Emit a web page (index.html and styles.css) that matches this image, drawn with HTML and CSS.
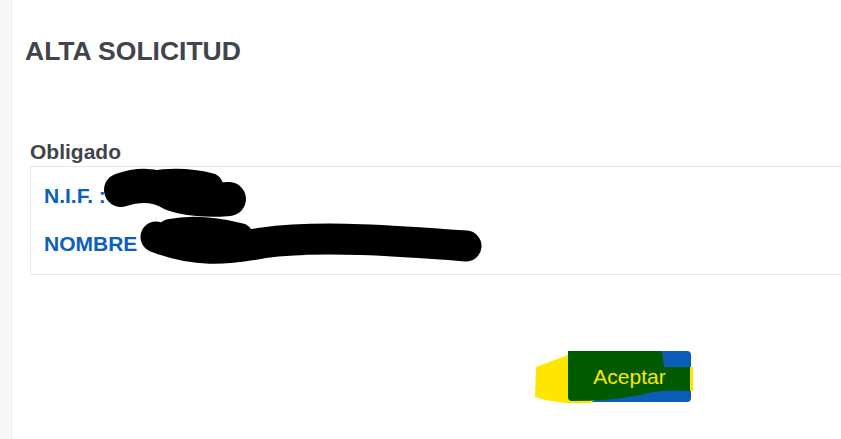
FILE: index.html
```html
<!DOCTYPE html>
<html lang="es">
<head>
<meta charset="utf-8">
<title>Alta solicitud</title>
<link rel="stylesheet" href="styles.css">
</head>
<body>
<div class="page">
  <aside class="sidebar"></aside>
  <main class="main">
    <h1 class="title">ALTA SOLICITUD</h1>
    <section class="obligado">
      <h2 class="section-title">Obligado</h2>
      <div class="box">
        <div class="row">N.I.F. :</div>
        <div class="row">NOMBRE</div>
      </div>
    </section>
    <div class="actions">
      <button class="btn" type="button">
        <svg class="btn-marks" width="160" height="60" viewBox="533 350 160 60" aria-hidden="true">
          <path d="M568 356 L536 368 L535 398 Q560 406 590 404 L600 398 L568 398 Z" fill="#ffe600"/>
          <path d="M568 352 L662 352 L664 368 L690 368 L690 392 Q660 390 640 396 Q610 402 572 402 Q568 402 568 398 Z" fill="#005a00"/>
          <path d="M690 368 L695 368 L695 392 L690 392 Z" fill="#ffe600"/>
        </svg>
        <span class="btn-text">Aceptar</span>
      </button>
    </div>
  </main>
  <svg class="scribbles" width="841" height="439" viewBox="0 0 841 439" aria-hidden="true">
    <path d="M121 190 Q150 180 172 194 Q195 202 229 199" fill="none" stroke="#000" stroke-width="34" stroke-linecap="round" stroke-linejoin="round"/>
    <path d="M126 190 Q170 176 210 186" fill="none" stroke="#000" stroke-width="26" stroke-linecap="round"/>
    <path d="M156 237 C195 252 225 250 262 243 C320 235 400 241 466 246" fill="none" stroke="#000" stroke-width="31" stroke-linecap="round" stroke-linejoin="round"/>
    <path d="M170 232 Q200 226 240 236" fill="none" stroke="#000" stroke-width="26" stroke-linecap="round"/>
  </svg>
</div>
</body>
</html>
```
FILE: styles.css
```css
html, body {
  margin: 0;
  padding: 0;
  background: #ffffff;
}

.page {
  position: relative;
  display: flex;
  width: 841px;
  height: 439px;
  overflow: hidden;
  font-family: "Liberation Sans", Arial, sans-serif;
}

.sidebar {
  width: 11px;
  flex: 0 0 11px;
  background: #f7f7f7;
  border-right: 1px solid #ececec;
}

.main {
  flex: 1;
  padding-left: 13px;
  padding-top: 36px;
  min-width: 0;
}

.title {
  margin: 0;
  font-size: 26.5px;
  line-height: 30px;
  font-weight: bold;
  color: #40454b;
}

.obligado {
  margin-top: 74px;
  margin-left: 5px;
}

.section-title {
  margin: 0 0 2px 0;
  font-size: 21px;
  line-height: 24px;
  font-weight: bold;
  color: #40454b;
}

.box {
  border: 1px solid #e3e8ee;
  border-right: none;
  margin-right: -20px;
  padding: 17px 13px 18px 13px;
  display: flex;
  flex-direction: column;
  gap: 24px;
}

.row {
  font-size: 21px;
  line-height: 24px;
  font-weight: bold;
  color: #0b5fc0;
}

.actions {
  margin-top: 76px;
  padding-left: 543px;
}

.btn {
  position: relative;
  width: 123px;
  height: 51px;
  border: none;
  border-radius: 4px;
  background: #0b5eb8;
  color: #ffe600;
  font-family: "Liberation Sans", Arial, sans-serif;
  font-size: 21px;
  padding: 0;
}

.btn-marks {
  position: absolute;
  left: -35px;
  top: -2px;
}

.btn-text {
  position: relative;
}

.scribbles {
  position: absolute;
  left: 0;
  top: 0;
  pointer-events: none;
}
```
